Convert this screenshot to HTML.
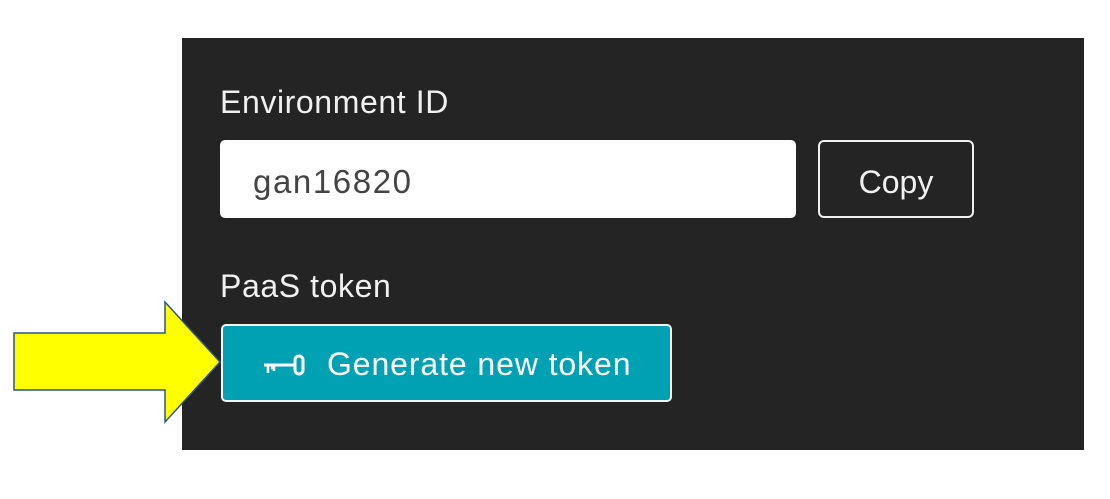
<!DOCTYPE html>
<html><head><style>
body{margin:0;width:1110px;height:499px;background:#fff;position:relative;overflow:hidden;font-family:"Liberation Sans",sans-serif}
.panel{position:absolute;left:182px;top:38px;width:902px;height:412px;background:#242424}
.t{position:absolute;color:#f0f0f0;font-size:32px;white-space:nowrap;letter-spacing:0.6px}
.input{position:absolute;left:220px;top:140px;width:576px;height:78px;background:#fff;border-radius:5px}
.copy{position:absolute;left:818px;top:140px;width:152px;height:74px;border:2px solid #f0f0f0;border-radius:6px;color:#f0f0f0;font-size:32px;text-align:center;line-height:80px}
.btn{position:absolute;left:221px;top:324px;width:447px;height:74px;background:#00a1b2;border:2px solid #f4f4f4;border-radius:5px;color:#fff;font-size:32px;letter-spacing:0.9px}
</style></head><body>
<div class="panel"></div>
<div class="t" style="left:220px;top:84px">Environment ID</div>
<div class="input"><div style="position:absolute;left:33px;top:23px;font-size:33px;color:#444;letter-spacing:1.6px">gan16820</div></div>
<div class="copy">Copy</div>
<div class="t" style="left:220px;top:268px">PaaS token</div>
<div class="btn">
<svg style="position:absolute;left:39px;top:27px" width="44" height="24" viewBox="0 0 44 24">
<path d="M2 12H32" stroke="#fff" stroke-width="3"/>
<path d="M6 12V20M12 12V18M9 15H13" stroke="#fff" stroke-width="2.5"/>
<rect x="33" y="3" width="8" height="18" rx="4" fill="none" stroke="#fff" stroke-width="3"/>
</svg>
<div style="position:absolute;left:104px;top:20px">Generate new token</div>
</div>
<svg style="position:absolute;left:0;top:0" width="240" height="499">
<path d="M14 333H165V302L220 362L165 422V390H14Z" fill="#ffff00" stroke="#2f528f" stroke-width="1.5"/>
</svg>
</body></html>
